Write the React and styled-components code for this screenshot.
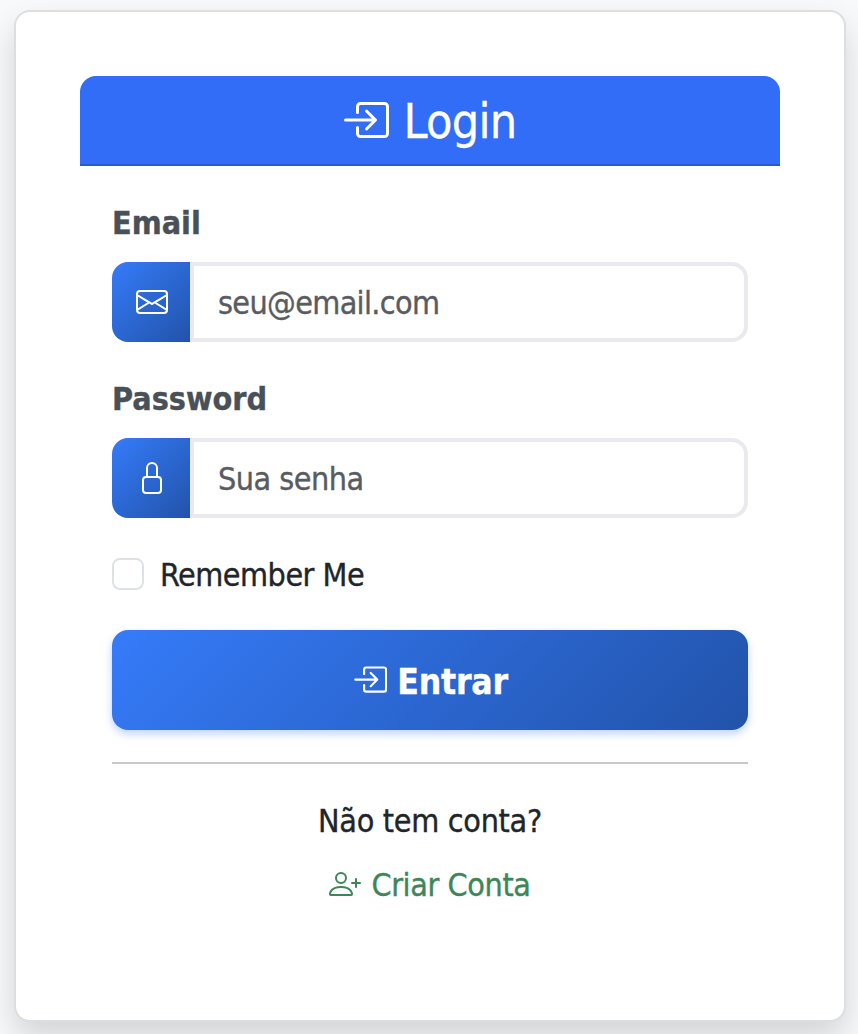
import React from "react";
import styled, { createGlobalStyle } from "styled-components";
import { BsBoxArrowInRight, BsEnvelope, BsLock, BsPersonPlus } from "react-icons/bs";

const GlobalStyle = createGlobalStyle`
  *, *::before, *::after { box-sizing: border-box; }
  body {
    margin: 0;
    overflow: hidden;
    background: #f8f9fa;
    color: #212529;
    font-family: Tahoma, "DejaVu Sans Condensed", "DejaVu Sans", sans-serif;
    font-stretch: condensed;
    font-size: 32px;
    line-height: 48px;
    -webkit-text-stroke: 0.35px currentColor;
  }
`;

const Page = styled.main`
  height: 1034px;
  padding: 10px 12px 12px 14px;
  overflow: hidden;
`;

const Card = styled.section`
  height: 1012px;
  padding: 64px;
  background: #fff;
  border: 2px solid #dddedf;
  border-radius: 16px;
  box-shadow: 0 16px 32px rgba(0, 0, 0, 0.15);
`;

const Header = styled.header`
  display: flex;
  align-items: center;
  justify-content: center;
  height: 90px;
  background: #316df6;
  border-bottom: 2px solid #2a5cc8;
  border-radius: 16px 16px 0 0;
  color: #fff;
`;

const Caption = styled.span`
  padding-top: ${({ $drop = 2 }) => $drop}px;
`;

const Title = styled.h1`
  display: flex;
  align-items: center;
  gap: 15px;
  margin: 0;
  padding-right: 3px;
  font-size: 48px;
  font-weight: 400;
  line-height: 58px;
  letter-spacing: -0.7px;
`;

const Form = styled.form`
  display: flex;
  flex-direction: column;
  padding: 32px;
`;

const Label = styled.label`
  padding-top: 1px;
  margin-bottom: 15px;
  color: #495057;
  font-weight: 700;
  letter-spacing: 0;
`;

const InputGroup = styled.div`
  display: flex;
  height: 80px;
  margin-bottom: 32px;
`;

const Addon = styled.span`
  display: flex;
  flex: 0 0 78px;
  align-items: center;
  justify-content: center;
  padding-left: 2px;
  background: linear-gradient(135deg, #357bf9, #2253aa);
  border-radius: 16px 0 0 16px;
  color: #fff;
`;

const Input = styled.input`
  flex: 1;
  min-width: 0;
  padding: 2px 24px 0;
  background: #fff;
  border: 4px solid #e9eaee;
  border-radius: 0 16px 16px 0;
  outline: 0;
  color: #212529;
  font: inherit;
  letter-spacing: ${({ $tracking }) => $tracking};
  &::placeholder { color: #595c5f; opacity: 1; }
`;

const CheckRow = styled.label`
  display: flex;
  align-items: center;
  gap: 16px;
  height: 48px;
  margin-bottom: 32px;
  letter-spacing: -0.5px;
`;

const Checkbox = styled.input`
  appearance: none;
  width: 32px;
  height: 32px;
  margin: 0;
  background: #fff;
  border: 2px solid #dee2e6;
  border-radius: 8px;
`;

const SubmitButton = styled.button`
  display: flex;
  align-items: center;
  justify-content: center;
  gap: 10px;
  height: 100px;
  padding: 0;
  background: linear-gradient(135deg, #357bf9, #2253aa);
  border: 0;
  border-radius: 16px;
  box-shadow: 0 4px 8px rgba(49, 109, 246, 0.3);
  color: #fff;
  font: inherit;
  font-size: 35.2px;
  font-weight: 700;
  letter-spacing: -0.2px;
`;

const Divider = styled.hr`
  width: 100%;
  margin: 32px 0;
  border: 0;
  border-top: 2px solid #c7c8c9;
`;

const Question = styled.p`
  margin: 0 0 15px;
  padding-top: 1px;
  text-align: center;
  letter-spacing: -0.3px;
`;

const SignupLink = styled.a`
  display: flex;
  align-items: center;
  justify-content: center;
  gap: 10px;
  height: 48px;
  color: #3d8657;
  text-decoration: none;
  letter-spacing: -0.4px;
`;

export default function App() {
  return (
    <>
      <GlobalStyle />
      <Page>
        <Card>
          <Header>
            <Title><BsBoxArrowInRight size={48} /><Caption>Login</Caption></Title>
          </Header>
          <Form>
            <Label htmlFor="email">Email</Label>
            <InputGroup>
              <Addon><BsEnvelope size={32} /></Addon>
              <Input id="email" type="email" placeholder="seu@email.com" $tracking="-0.65px" />
            </InputGroup>
            <Label htmlFor="password">Password</Label>
            <InputGroup>
              <Addon><BsLock size={32} /></Addon>
              <Input id="password" type="password" placeholder="Sua senha" $tracking="-0.5px" />
            </InputGroup>
            <CheckRow><Checkbox type="checkbox" /><Caption>Remember Me</Caption></CheckRow>
            <SubmitButton type="button"><BsBoxArrowInRight size={35.2} /><Caption $drop={3}>Entrar</Caption></SubmitButton>
            <Divider />
            <Question>Não tem conta?</Question>
            <SignupLink href="#"><BsPersonPlus size={32} /><Caption>Criar Conta</Caption></SignupLink>
          </Form>
        </Card>
      </Page>
    </>
  );
}
